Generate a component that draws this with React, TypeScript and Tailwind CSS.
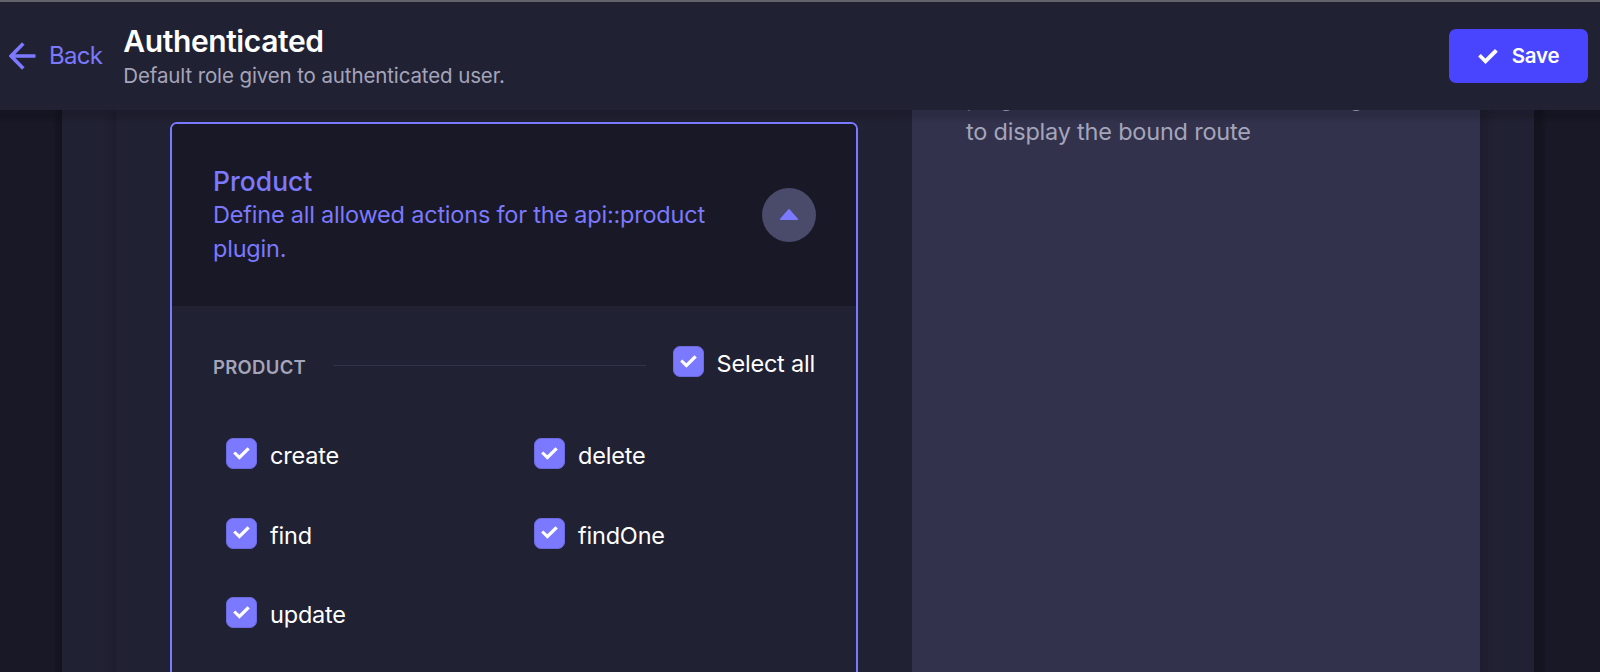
import React, { useState } from 'react';

const ACTIONS = ['create', 'delete', 'find', 'findOne', 'update'];

const CheckIcon: React.FC<{ className?: string }> = ({ className }) => (
  <svg viewBox="0 0 20 15" fill="currentColor" className={className}>
    <path d="M0.2 7.6 L2.7 5.1 L7.4 9.6 L17 0.1 L19.8 2.8 L7.5 14.9 Z" />
  </svg>
);

interface CheckboxProps {
  label: string;
  checked: boolean;
  onChange: () => void;
}

const Checkbox: React.FC<CheckboxProps> = ({ label, checked, onChange }) => (
  <button
    type="button"
    role="checkbox"
    aria-checked={checked}
    onClick={onChange}
    className="flex items-start gap-[13px] text-white"
  >
    <span className="flex h-[31px] w-[31px] shrink-0 items-center justify-center rounded-[7px] border border-[#6d6be0] bg-[#7b79ff]">
      {checked && <CheckIcon className="mb-px h-[13px] w-[17px]" />}
    </span>
    <span className="pt-[3px] text-[23.5px] leading-[30px] tracking-[-0.2px]">{label}</span>
  </button>
);

const Header: React.FC = () => (
  <header className="relative z-10 flex h-[110px] items-center border-t-2 border-[#63636b] bg-[#212134] pr-3 pl-[9px] shadow-[2px_2px_4px_7px_rgba(3,3,5,0.13)]">
    <a href="#" className="flex items-center text-[#7b79ff]">
      <svg viewBox="0 0 27 28" className="h-7 w-[27px]" fill="none" stroke="currentColor" strokeWidth="3.6">
        <path d="M26.5 14H2.5M14.3 1.5L2 14l12.3 12.5" />
      </svg>
      <span className="ml-[13px] text-[24px] leading-8 tracking-[-0.7px]">Back</span>
    </a>
    <div className="ml-[21px]">
      <h1 className="text-[30px] leading-[38px] font-semibold tracking-[-0.4px] text-white">Authenticated</h1>
      <p className="pt-px text-[20.5px] leading-[30px] tracking-[-0.12px] text-[#a5a5ba]">
        Default role given to authenticated user.
      </p>
    </div>
    <button
      type="button"
      className="ml-auto flex h-[54px] w-[139px] items-center justify-center gap-[14px] rounded-[7px] bg-[#4945ff] text-white"
    >
      <CheckIcon className="h-[15px] w-5" />
      <span className="text-[20.5px] font-semibold tracking-[-0.2px]">Save</span>
    </button>
  </header>
);

const App: React.FC = () => {
  const [selected, setSelected] = useState<string[]>(ACTIONS);

  const allSelected = selected.length === ACTIONS.length;

  const toggle = (action: string) => {
    setSelected(
      selected.includes(action) ? selected.filter((a) => a !== action) : [...selected, action]
    );
  };

  return (
    <div className="h-[672px] overflow-hidden bg-[#181826] font-['Inter',sans-serif]">
      <Header />

      <main className="h-[562px] pr-[66px] pl-[62px]">
        <div className="h-full bg-[#212134] px-[54px] shadow-[2px_2px_3px_8px_rgba(3,3,5,0.15)]">
          <div className="flex h-full bg-[#212134] shadow-[1px_2px_6px_7px_rgba(3,3,5,0.1)]">
            {/* Permissions */}
            <div className="w-[796px] px-[54px] pt-3">
              <section className="h-[640px] overflow-hidden rounded-[7px] border-2 border-[#7b79ff]">
                <div className="flex h-[182px] items-center justify-between bg-[#181826] pr-10 pl-[41px] text-[#7b79ff]">
                  <div className="w-[510px]">
                    <h2 className="pt-px text-[26.5px] leading-[33px] font-medium">Product</h2>
                    <p className="text-[23.5px] leading-[34px] tracking-[-0.21px]">
                      Define all allowed actions for the api::product plugin.
                    </p>
                  </div>
                  <button
                    type="button"
                    aria-label="Collapse"
                    className="flex h-[54px] w-[54px] items-center justify-center rounded-full bg-[#4a4a6a]"
                  >
                    <svg viewBox="0 0 18 11" className="mb-px h-[11px] w-[18px]" fill="currentColor">
                      <path d="M8.2 0.4a1.2 1.2 0 0 1 1.6 0L17.7 9.4a0.9 0.9 0 0 1-.7 1.6H1a0.9 0.9 0 0 1-.7-1.6z" />
                    </svg>
                  </button>
                </div>

                <div className="px-[41px] pt-10">
                  <div className="flex items-start">
                    <h3 className="pt-[9px] text-[18.5px] leading-6 font-semibold tracking-[0.3px] text-[#a5a5ba]">
                      PRODUCT
                    </h3>
                    <div className="mx-[27px] mt-[19px] h-px flex-1 bg-[#32324d]" />
                    <Checkbox
                      label="Select all"
                      checked={allSelected}
                      onChange={() => setSelected(allSelected ? [] : ACTIONS)}
                    />
                  </div>
                  <div className="mt-[59px] grid grid-cols-[308px_1fr] gap-y-[46.5px] pl-[13px]">
                    {ACTIONS.map((action) => (
                      <Checkbox
                        key={action}
                        label={action}
                        checked={selected.includes(action)}
                        onChange={() => toggle(action)}
                      />
                    ))}
                  </div>
                </div>
              </section>
            </div>

            {/* Advanced settings, scrolled under the header */}
            <aside className="flex-1 bg-[#32324d] pl-[54px] text-[#a5a5ba]">
              <p className="-mt-[29px] w-[460px] text-[23.5px] leading-[34px] tracking-[-0.21px]">
                plugin's actions and click on the cog icon to display the bound route
              </p>
            </aside>
          </div>
        </div>
      </main>
    </div>
  );
};

export default App;
